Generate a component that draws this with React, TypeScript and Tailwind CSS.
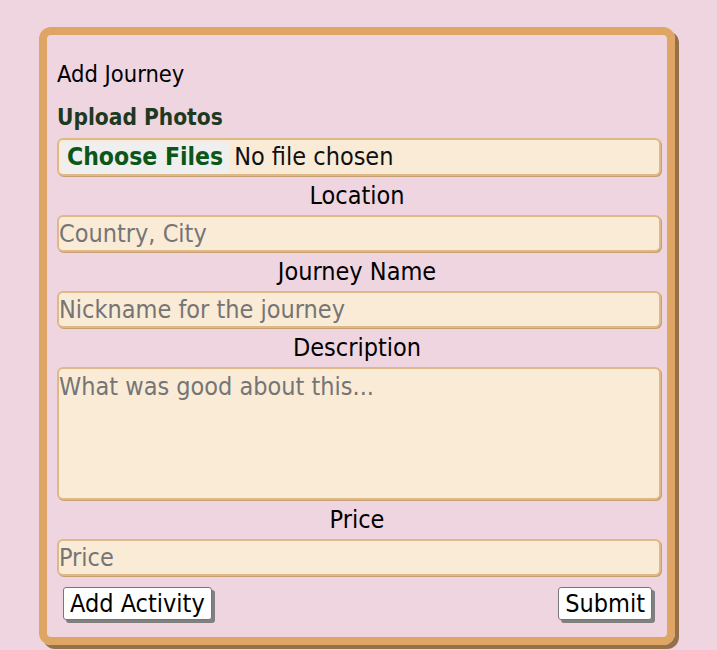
import React from "react";

const font = "font-['DejaVu_Sans_Condensed','DejaVu_Sans',sans-serif] font-stretch-condensed";

const field =
  "block w-[604px] h-[37px] box-border rounded-[6px] border-2 border-[#deb887] bg-[#faebd7] p-0 text-[25px] leading-[29px] text-[#111] placeholder:text-[#757575] shadow-[1px_1px_0_#c5a074] outline-none";

function Label({ children }: { children: React.ReactNode }) {
  return (
    <div className="flex h-[39px] w-[600px] items-center justify-center text-[25px] leading-[29px] text-black">
      {children}
    </div>
  );
}

export default function App() {
  return (
    <div className={`min-h-[650px] bg-[#efd5e0] pt-[27px] pl-[39px] ${font}`}>
      <form className="box-border w-[636px] h-[618px] rounded-[12px] border-8 border-[#dea564] shadow-[4px_4px_0_#94714b] pl-[10px] pt-[28px]">
        <div className="text-[23.5px] leading-[22px] text-black">Add Journey</div>
        <div className="mt-[21px] text-[22.5px] leading-[22px] font-bold text-[#1d3a20]">Upload Photos</div>
        <div className="mt-[10px] flex h-[38px] w-[604px] box-border items-center rounded-[6px] border-2 border-[#deb887] bg-[#faebd7] shadow-[1px_1px_0_#c5a074] pl-[2px]">
          <span className="flex h-[31px] items-center rounded-[4px] bg-[#efefef] px-[6px] text-[24.5px] font-bold text-[#0c5717]">
            Choose Files
          </span>
          <span className="ml-[5px] text-[25px] text-[#111]">No file chosen</span>
        </div>
        <Label>Location</Label>
        <input className={`${field} ${font}`} placeholder="Country, City" />
        <Label>Journey Name</Label>
        <input className={`${field} ${font}`} placeholder="Nickname for the journey" />
        <Label>Description</Label>
        <textarea
          className={`block w-[604px] h-[133px] box-border resize-none rounded-[6px] border-2 border-[#deb887] bg-[#faebd7] px-0 pt-[3px] pb-0 text-[25px] leading-[29px] placeholder:text-[#757575] shadow-[1px_1px_0_#c5a074] outline-none ${font}`}
          placeholder="What was good about this..."
        />
        <Label>Price</Label>
        <input className={`${field} ${font}`} placeholder="Price" />
        <div className="mt-[11px] flex w-[600px] justify-between pl-[6px] pr-[5px]">
          <button
            type="button"
            className={`h-[33px] rounded-[3px] border border-[#767676] bg-white px-[6px] text-[25px] leading-[29px] text-black shadow-[3px_3px_0_#808080] ${font}`}
          >
            Add Activity
          </button>
          <button
            type="button"
            className={`h-[33px] rounded-[3px] border border-[#767676] bg-white px-[6px] text-[25px] leading-[29px] text-black shadow-[3px_3px_0_#808080] ${font}`}
          >
            Submit
          </button>
        </div>
      </form>
    </div>
  );
}
